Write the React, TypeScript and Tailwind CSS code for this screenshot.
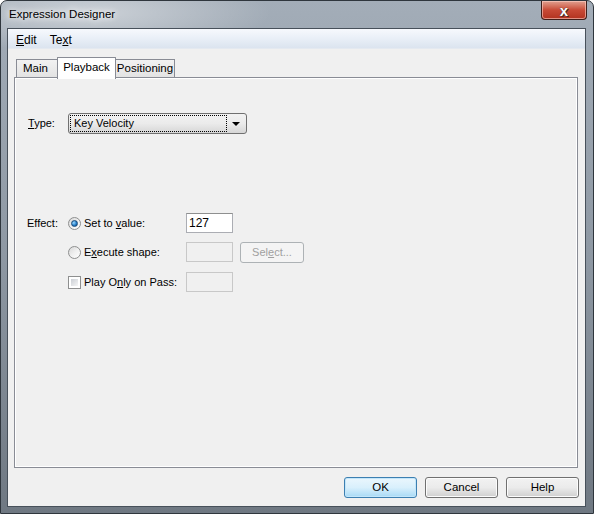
import React from 'react';

const font = "font-['Liberation_Sans',Arial,sans-serif]";

const U: React.FC<{ children: React.ReactNode }> = ({ children }) => <span className="underline underline-offset-[1px]">{children}</span>;

const Radio: React.FC<{ checked?: boolean }> = ({ checked }) => (
  <div className="w-[13px] h-[13px] rounded-full border border-[#8e8f8f] bg-gradient-to-br from-[#d8d8d8] via-[#efefef] to-[#ffffff] flex items-center justify-center shrink-0">
    {checked && (
      <div className="w-[7px] h-[7px] rounded-full border border-[#1b4a78] bg-[radial-gradient(circle_at_35%_35%,#9ad9ff,#1f78c4_60%,#0d4275)]" />
    )}
  </div>
);

const Check: React.FC = () => (
  <div className="w-[13px] h-[13px] border border-[#8e8f8f] bg-white p-[2px] shrink-0">
    <div className="w-full h-full bg-gradient-to-br from-[#cbcfd5] to-[#f6f6f6]" />
  </div>
);

const Btn: React.FC<{ children: React.ReactNode; def?: boolean }> = ({ children, def }) => (
  <div
    className={
      'w-[73px] h-[21px] rounded-[3px] border flex items-center justify-center text-[11.5px] text-black ' +
      (def
        ? 'border-[#3c7fb1] bg-gradient-to-b from-[#eaf6fd] via-[#d9f0fc] to-[#a7d9f5] shadow-[inset_0_0_0_1px_#c3e6fa]'
        : 'border-[#707070] bg-gradient-to-b from-[#f2f2f2] via-[#ebebeb] to-[#cfcfcf] shadow-[inset_0_0_0_1px_#fcfcfc]')
    }
  >
    {children}
  </div>
);

export default function App() {
  return (
    <div className={`w-[594px] h-[514px] ${font} bg-white`}>
      <div className="w-[594px] h-[514px] relative border border-[#2f363d] rounded-t-[7px] flex flex-col bg-gradient-to-b from-[#a3adb8] via-[#8e98a3] to-[#6f7882]">
        <div className="absolute inset-0 rounded-t-[6px] bg-[radial-gradient(ellipse_180px_40px_at_90px_12px,rgba(255,255,255,0.45),transparent)] pointer-events-none" />
        {/* title bar */}
        <div className="h-[27px] shrink-0 flex items-center pl-[8px] pt-[1px] relative">
          <span className="text-[11.5px] text-black [text-shadow:0_0_6px_#ffffff,0_0_10px_#ffffff]">Expression Designer</span>
          <div className="absolute top-0 right-[6px] w-[46px] h-[19px] rounded-b-[4px] border border-[#3f1f1a] border-t-0 bg-gradient-to-b from-[#e0a090] via-[#c84a36] to-[#b2321f] shadow-[inset_0_0_0_1px_rgba(255,210,200,0.6)] flex items-center justify-center">
            <span className="text-white font-bold text-[15px] leading-none [text-shadow:0_0_1px_#2a1a1a,1px_1px_0_#4a2a2a]">x</span>
          </div>
        </div>
        {/* client */}
        <div className="flex-1 ml-[6px] mr-[7px] mb-[6px] border border-[#47505a] bg-[#f0f0f0] flex flex-col relative">
          <div className="h-[20px] shrink-0 border-b border-[#e4e9f0] bg-gradient-to-b from-[#f7f9fd] via-[#e9eff7] to-[#dbe4ef] flex items-center pt-[2px] text-[12px] text-black">
            <span className="ml-[8px]"><U>E</U>dit</span>
            <span className="ml-[13px]">Te<U>x</U>t</span>
          </div>
          <div className="flex-1 flex flex-col pl-[6px] pr-[7px] pt-[8px]">
            {/* tabs */}
            <div className="h-[21px] flex items-end pl-[2px] relative z-10 -mb-px text-[11.5px] text-black">
              <div className="h-[19px] px-[6px] w-[41px] border border-[#898c95] border-r-0 bg-gradient-to-b from-[#f2f2f2] to-[#e3e3e3] flex items-center">Main</div>
              <div className="h-[22px] w-[59px] -mb-px border border-[#898c95] border-b-0 bg-white flex items-center justify-center pb-[2px] rounded-t-[1px]">Playback</div>
              <div className="h-[19px] w-[59px] border border-[#898c95] border-l-0 bg-gradient-to-b from-[#f2f2f2] to-[#e3e3e3] flex items-center justify-center">Positioning</div>
            </div>
            {/* panel */}
            <div className="h-[391px] border border-[#898c95] bg-[#f0f0f0] shadow-[inset_0_0_0_1px_#ffffff] pt-[35px] pl-[13px] text-[11px] text-black">
              <div className="flex items-center h-[21px]">
                <span className="w-[40px]"><U>T</U>ype:</span>
                <div className="w-[179px] h-[21px] rounded-[3px] border border-[#707070] bg-gradient-to-b from-[#f2f2f2] via-[#ebebeb] to-[#d6d6d6] flex items-center p-[1px]">
                  <div className="flex-1 h-full border border-dotted border-black flex items-center pl-[3px]">Key Velocity</div>
                  <div className="w-[18px] flex justify-center">
                    <div className="w-0 h-0 border-l-[4px] border-r-[4px] border-t-[4px] border-l-transparent border-r-transparent border-t-black" />
                  </div>
                </div>
              </div>
              <div className="flex mt-[79px]">
                <span className="w-[40px] h-[20px] flex items-center -ml-px">Effect:</span>
                <div className="flex flex-col gap-[9px] ml-px">
                  <div className="flex items-center h-[20px]">
                    <div className="w-[118px] flex items-center gap-[3px]">
                      <Radio checked />
                      <span>Set to <U>v</U>alue:</span>
                    </div>
                    <div className="w-[47px] h-[20px] border border-[#abadb3] border-t-[#8e8f8f] bg-white flex items-center pl-[2px] text-[12px]">127</div>
                  </div>
                  <div className="flex items-center h-[20px]">
                    <div className="w-[118px] flex items-center gap-[3px]">
                      <Radio />
                      <span>E<U>x</U>ecute shape:</span>
                    </div>
                    <div className="w-[47px] h-[20px] border border-[#c8c8c8] bg-[#f0f0f0]" />
                    <div className="ml-[7px] w-[64px] h-[21px] rounded-[3px] border border-[#adb2b5] bg-[#f4f4f4] flex items-center justify-center text-[#a0a0a0]">Sel<U>e</U>ct...</div>
                  </div>
                  <div className="flex items-center h-[20px] mt-px">
                    <div className="w-[118px] flex items-center gap-[3px]">
                      <Check />
                      <span>Play O<U>n</U>ly on Pass:</span>
                    </div>
                    <div className="w-[47px] h-[20px] border border-[#c8c8c8] bg-[#f0f0f0]" />
                  </div>
                </div>
              </div>
            </div>
            {/* buttons */}
            <div className="flex justify-end gap-[8px] mt-[9px] -mr-px">
              <Btn def>OK</Btn>
              <Btn>Cancel</Btn>
              <Btn>Help</Btn>
            </div>
          </div>
        </div>
      </div>
    </div>
  );
}
